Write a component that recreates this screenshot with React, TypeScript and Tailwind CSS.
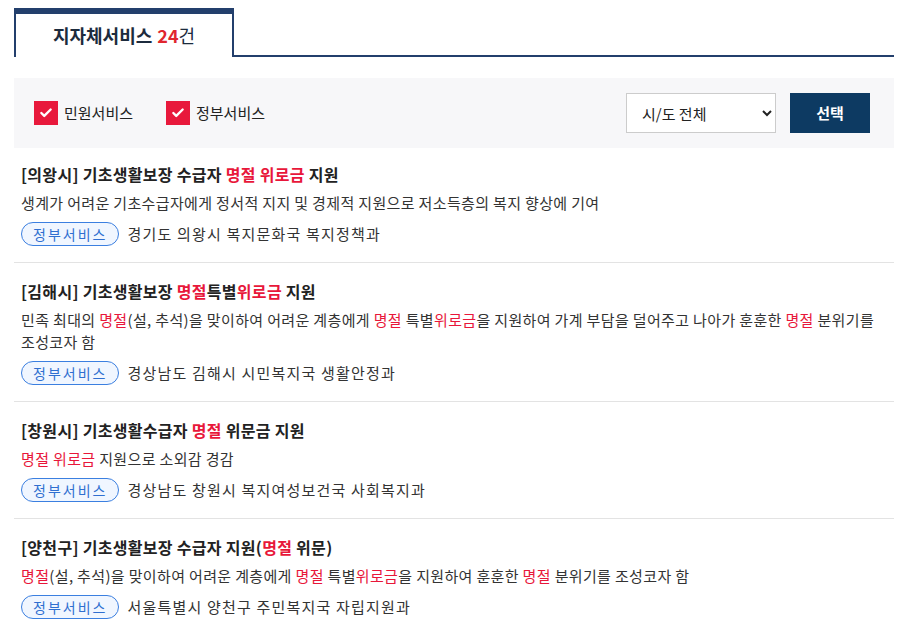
import { Check } from 'lucide-react';

type Part = string | { hl: string };

const items: { title: Part[]; desc: Part[]; org: string }[] = [
  {
    title: ['[의왕시] 기초생활보장 수급자 ', { hl: '명절 위로금' }, ' 지원'],
    desc: ['생계가 어려운 기초수급자에게 정서적 지지 및 경제적 지원으로 저소득층의 복지 향상에 기여'],
    org: '경기도 의왕시 복지문화국 복지정책과',
  },
  {
    title: ['[김해시] 기초생활보장 ', { hl: '명절' }, '특별', { hl: '위로금' }, ' 지원'],
    desc: [
      '민족 최대의 ',
      { hl: '명절' },
      '(설, 추석)을 맞이하여 어려운 계층에게 ',
      { hl: '명절' },
      ' 특별',
      { hl: '위로금' },
      '을 지원하여 가계 부담을 덜어주고 나아가 훈훈한 ',
      { hl: '명절' },
      ' 분위기를 조성코자 함',
    ],
    org: '경상남도 김해시 시민복지국 생활안정과',
  },
  {
    title: ['[창원시] 기초생활수급자 ', { hl: '명절' }, ' 위문금 지원'],
    desc: [{ hl: '명절' }, ' ', { hl: '위로금' }, ' 지원으로 소외감 경감'],
    org: '경상남도 창원시 복지여성보건국 사회복지과',
  },
  {
    title: ['[양천구] 기초생활보장 수급자 지원(', { hl: '명절' }, ' 위문)'],
    desc: [
      { hl: '명절' },
      '(설, 추석)을 맞이하여 어려운 계층에게 ',
      { hl: '명절' },
      ' 특별',
      { hl: '위로금' },
      '을 지원하여 훈훈한 ',
      { hl: '명절' },
      ' 분위기를 조성코자 함',
    ],
    org: '서울특별시 양천구 주민복지국 자립지원과',
  },
];

function Text({ parts }: { parts: Part[] }) {
  return (
    <>
      {parts.map((p, i) =>
        typeof p === 'string' ? (
          <span key={i}>{p}</span>
        ) : (
          <span key={i} className="text-[#e8173a]">
            {p.hl}
          </span>
        )
      )}
    </>
  );
}

function CheckItem({ label }: { label: string }) {
  return (
    <label className="flex items-center gap-[6px] text-[15px] text-[#222]">
      <span className="flex h-6 w-6 items-center justify-center bg-[#e8193c]">
        <Check className="h-[14px] w-[14px] text-white" strokeWidth={4} />
      </span>
      {label}
    </label>
  );
}

export default function App() {
  return (
    <div className="min-h-screen bg-white pt-2 font-['Noto_Sans_CJK_KR','Noto_Sans',sans-serif]">
      <div className="ml-[14px] w-[880px]">
        {/* Tab */}
        <div className="flex items-end">
          <div className="flex h-[49px] w-[220px] items-center justify-center border-x-2 border-t-[6px] border-[#233f6c] text-[18px] text-[#1c2b3d]">
            <span className="font-bold">지자체서비스</span>
            <span className="ml-[5px] font-bold text-[#e0262e]">24</span>
            <span>건</span>
          </div>
          <div className="flex-1 border-b-2 border-[#233f6c]" />
        </div>

        {/* Filter */}
        <div className="mt-[21px] flex h-[70px] items-center bg-[#f7f7f9] pl-5 pr-6">
          <div className="flex items-center gap-[33px]">
            <CheckItem label="민원서비스" />
            <CheckItem label="정부서비스" />
          </div>
          <div className="ml-auto flex items-center gap-[14px]">
            <select className="h-10 w-[150px] border border-[#cccccc] bg-white pl-[11px] pr-2 text-[15px] text-[#222] outline-none">
              <option>시/도 전체</option>
            </select>
            <button className="h-10 w-20 bg-[#0d3a62] text-[15px] font-bold text-white">선택</button>
          </div>
        </div>

        {/* List */}
        <ul>
          {items.map((it, i) => (
            <li
              key={i}
              className={`px-[7px] pb-4 ${i === 0 ? 'pt-[15px]' : 'pt-[17px]'} ${
                i < items.length - 1 ? 'border-b border-[#e3e3e3]' : ''
              }`}
            >
              <div className="text-[16px] leading-[22px] font-bold tracking-[0.3px] text-[#222]">
                <Text parts={it.title} />
              </div>
              <p className="mt-[7px] break-keep text-[15px] leading-[22px] tracking-[0.35px] text-[#333]">
                <Text parts={it.desc} />
              </p>
              <div className="mt-2 flex items-center gap-2">
                <span className="flex h-6 items-center rounded-full border-[1.5px] border-[#3b7fe0] bg-[#f0f6ff] px-[11px] text-[14px] tracking-[2px] text-[#2f6fd0]">
                  정부서비스
                </span>
                <span className="text-[15px] tracking-[1.2px] text-[#333]">{it.org}</span>
              </div>
            </li>
          ))}
        </ul>
      </div>
    </div>
  );
}
